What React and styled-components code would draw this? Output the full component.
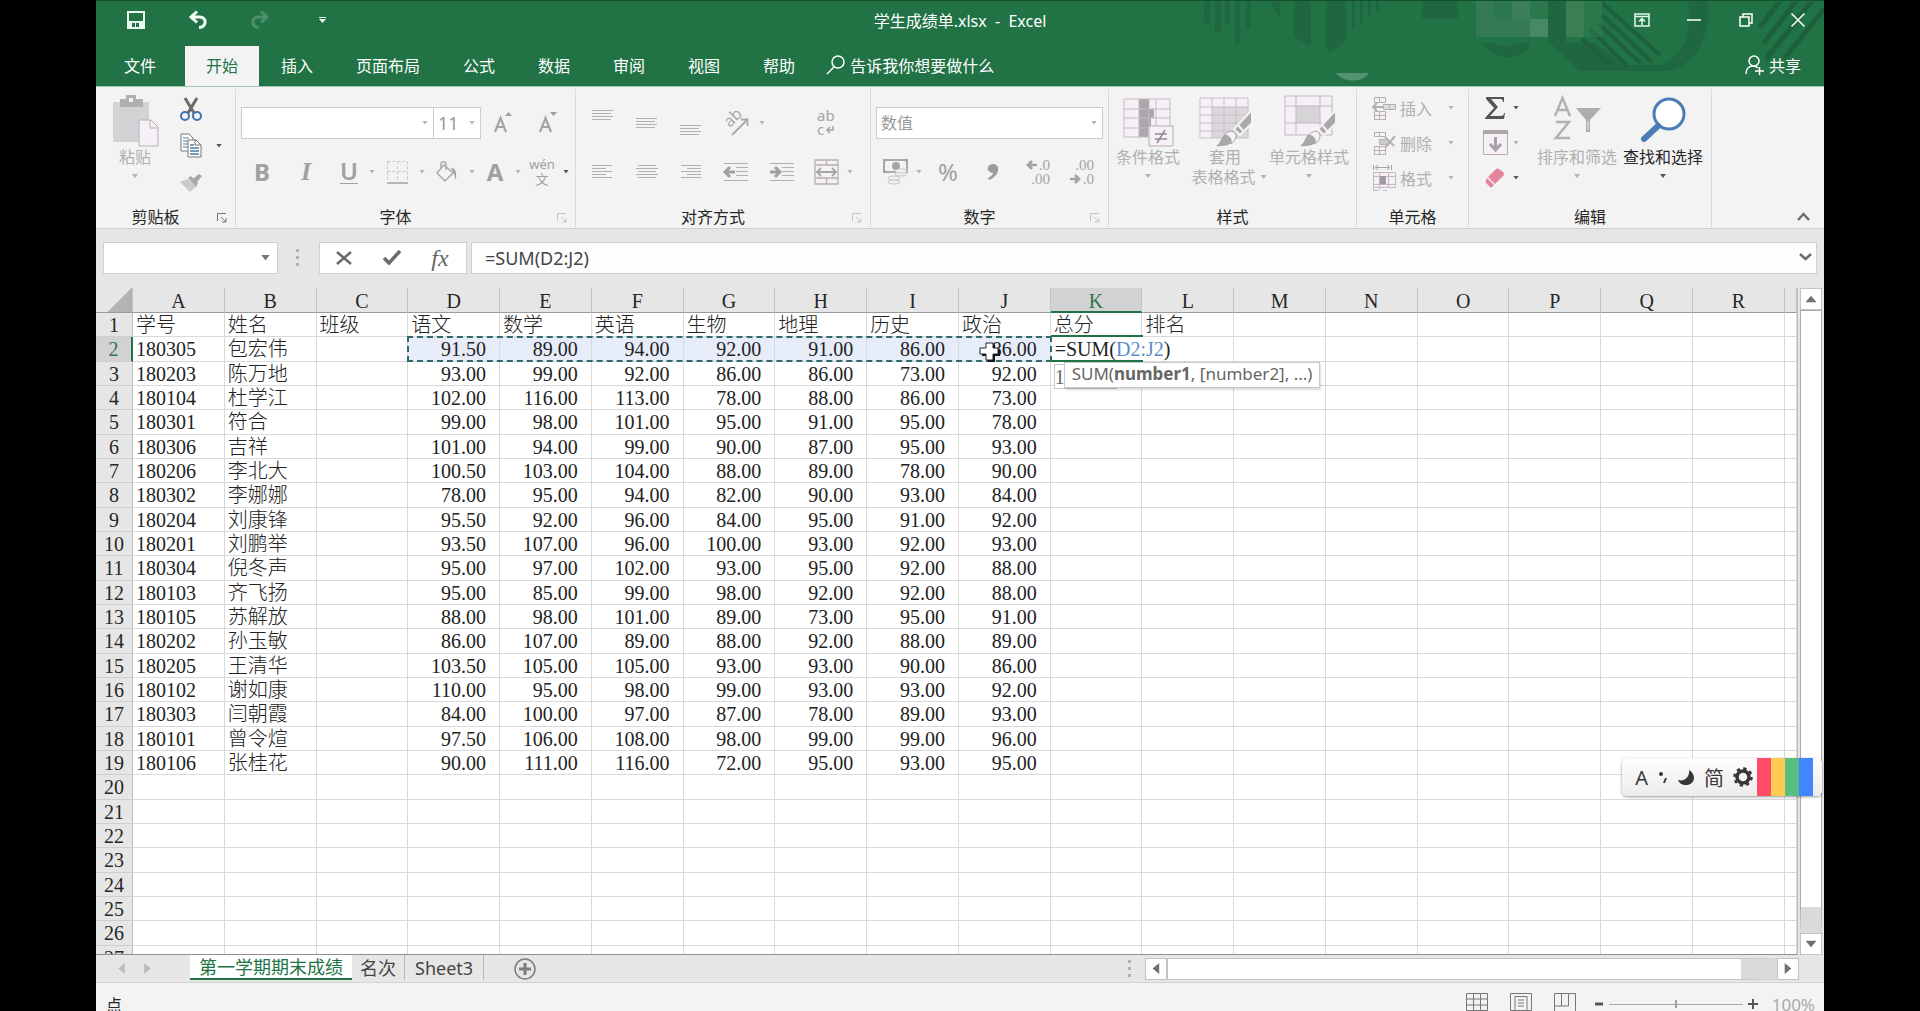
import React, { useState } from "react";
import styled, { createGlobalStyle, css } from "styled-components";

const columns = "ABCDEFGHIJKLMNOPQR".split("");

const headers = ["学号", "姓名", "班级", "语文", "数学", "英语", "生物", "地理", "历史", "政治", "总分", "排名"];

const students = [
  ["180305", "包宏伟", "", "91.50", "89.00", "94.00", "92.00", "91.00", "86.00", "86.00"],
  ["180203", "陈万地", "", "93.00", "99.00", "92.00", "86.00", "86.00", "73.00", "92.00"],
  ["180104", "杜学江", "", "102.00", "116.00", "113.00", "78.00", "88.00", "86.00", "73.00"],
  ["180301", "符合", "", "99.00", "98.00", "101.00", "95.00", "91.00", "95.00", "78.00"],
  ["180306", "吉祥", "", "101.00", "94.00", "99.00", "90.00", "87.00", "95.00", "93.00"],
  ["180206", "李北大", "", "100.50", "103.00", "104.00", "88.00", "89.00", "78.00", "90.00"],
  ["180302", "李娜娜", "", "78.00", "95.00", "94.00", "82.00", "90.00", "93.00", "84.00"],
  ["180204", "刘康锋", "", "95.50", "92.00", "96.00", "84.00", "95.00", "91.00", "92.00"],
  ["180201", "刘鹏举", "", "93.50", "107.00", "96.00", "100.00", "93.00", "92.00", "93.00"],
  ["180304", "倪冬声", "", "95.00", "97.00", "102.00", "93.00", "95.00", "92.00", "88.00"],
  ["180103", "齐飞扬", "", "95.00", "85.00", "99.00", "98.00", "92.00", "92.00", "88.00"],
  ["180105", "苏解放", "", "88.00", "98.00", "101.00", "89.00", "73.00", "95.00", "91.00"],
  ["180202", "孙玉敏", "", "86.00", "107.00", "89.00", "88.00", "92.00", "88.00", "89.00"],
  ["180205", "王清华", "", "103.50", "105.00", "105.00", "93.00", "93.00", "90.00", "86.00"],
  ["180102", "谢如康", "", "110.00", "95.00", "98.00", "99.00", "93.00", "93.00", "92.00"],
  ["180303", "闫朝霞", "", "84.00", "100.00", "97.00", "87.00", "78.00", "89.00", "93.00"],
  ["180101", "曾令煊", "", "97.50", "106.00", "108.00", "98.00", "99.00", "99.00", "96.00"],
  ["180106", "张桂花", "", "90.00", "111.00", "116.00", "72.00", "95.00", "93.00", "95.00"],
];

const rows = [headers, ...students];
while (rows.length < 27) rows.push([]);

const menu = ["插入", "页面布局", "公式", "数据", "审阅", "视图", "帮助"];

/* ---------- icons ---------- */

const SaveIcon = () => (
  <svg width="18" height="18" viewBox="0 0 18 18" fill="none" stroke="#e9fbef" strokeWidth="2">
    <path d="M1 1h16v16H1z" />
    <path d="M2 10h14v7H2z" fill="#e9fbef" stroke="none" />
    <path d="M5 12h3v4H5zM9 12h3v4H9z" fill="#217346" stroke="none" />
  </svg>
);

const UndoIcon = ({ color = "#f2fff6", flip }) => (
  <svg width="18" height="18" viewBox="0 0 18 18" fill="none" stroke={color} strokeWidth="3">
    <g transform={flip ? "translate(18 0) scale(-1 1)" : undefined}>
      <path d="M8 0.500L2 6l6 5.500M2 6h9c8 1 6 10-1 10.500" />
    </g>
  </svg>
);

const Decoration = () => (
  <svg width="624" height="86" viewBox="0 0 624 86">
    <g fill="#1f683f">
      <path d="M4 0h6v22H4zM15 0h6v32h-6zM25 0h5v22h-5zM35 0h5v44h-5zM46 0h5v28h-5zM70 0h10v18zM94 0h17v45l-17-9zM126 0h20v40l-16 12-4-4z" />
      <path d="M152 0h3v28h-3zM160 0h3v22h-3zM168 0h3v15h-3zM176 0h3v10h-3z" />
      <path d="M222 0h36v18h-36z" />
      <path d="M348 0h18v42h-18z" />
      <path d="M350 42h45l30 22h35c22-7 33-30 28-64h20c2 34-8 58-36 70h-92z" />
      <path d="M283 42h12c4 5 16 5 20 0h15c-4 18-38 20-47 0z" />
    </g>
    <g stroke="#1d6039" strokeWidth="4">
      <path d="M402 2l58 52M402 14l50 47M398 22l42 40M390 28l36 36M382 38l28 25" />
      <path d="M580 0l-20 26M596 0l-32 42M612 0l-46 58M624 8l-40 50" strokeWidth="5" />
    </g>
    <g fill="#3d7f58">
      <path d="M276 0h18v18h-18zM276 18h54v18h-54z" opacity="0.700" />
      <path d="M312 0h18v18h-18z" />
      <path d="M330 18h18v18h-18z" fill="#488864" />
      <path d="M366 0h18v36h-18z" opacity="0.900" />
      <path d="M294 0h18v18h-18zM330 0h18v18h-18zM384 0h18v36h-18z" opacity="0.400" />
    </g>
    <path d="M136 72h33c-6 10-26 10-33 0z" fill="#549370" />
  </svg>
);

const RibbonModeIcon = () => (
  <svg width="16" height="14" viewBox="0 0 16 14" fill="none" stroke="#e8f8ee" strokeWidth="1.500">
    <path d="M1 1h14v12H1zM1 3.500h14M8 12V6M5 8.500L8 5.500l3 3" />
  </svg>
);
const MinIcon = () => (
  <svg width="14" height="14" viewBox="0 0 14 14" stroke="#fff" strokeWidth="1.500"><path d="M0 7h14" /></svg>
);
const RestoreIcon = () => (
  <svg width="14" height="14" viewBox="0 0 14 14" fill="none" stroke="#fff" strokeWidth="1.500">
    <path d="M1 4h9v9H1zM4 4V1h9v9h-3" />
  </svg>
);
const CloseIcon = () => (
  <svg width="14" height="14" viewBox="0 0 14 14" stroke="#fff" strokeWidth="1.500"><path d="M0.500 0.500l13 13M13.500 0.500l-13 13" /></svg>
);
const TellIcon = () => (
  <svg width="19" height="20" viewBox="0 0 19 20" fill="none" stroke="#fff" strokeWidth="1.500">
    <circle cx="12" cy="7" r="6" /><path d="M8 12l-7 7" />
  </svg>
);
const ShareIcon = () => (
  <svg width="20" height="20" viewBox="0 0 20 20" fill="none" stroke="#fff" strokeWidth="1.500">
    <circle cx="9" cy="6" r="5" /><path d="M1 19c0-5 3-8 7-8 2 0 4 1 5 2M10 16h9M14.500 12v8" />
  </svg>
);

const PasteIcon = () => (
  <svg width="46" height="52" viewBox="0 0 46 52">
    <path d="M1 7h36v40H1z" fill="#d3d3d5" />
    <path d="M8 4h6V0h10v4h7v8H8z" fill="#b0afb1" />
    <path d="M17 3h4v4h-4z" fill="#f3f3f3" />
    <path d="M27 25h12l7 7v19H27z" fill="#f6eff6" stroke="#b5b2b5" />
    <path d="M38 25v8h7" fill="none" stroke="#b5b2b5" />
  </svg>
);
const CutIcon = () => (
  <svg width="22" height="24" viewBox="0 0 22 24" fill="none">
    <path d="M5 1l9 15M17 1L8 16" stroke="#6a6a6a" strokeWidth="3" />
    <circle cx="5" cy="19" r="4" stroke="#4173ad" strokeWidth="2" />
    <circle cx="17" cy="19" r="4" stroke="#4173ad" strokeWidth="2" />
  </svg>
);
const CopyIcon = () => (
  <svg width="22" height="25" viewBox="0 0 22 25" fill="#fff" stroke="#777">
    <path d="M1 1h8l4 4v13H1z" />
    <path d="M3 5h6M3 8h7M3 11h7M3 14h7" stroke="#4a7ca5" />
    <path d="M8 7h8l5 5v12H8z" />
    <path d="M15 7v5h6" fill="none" />
    <path d="M10 12h4M10 15h9M10 18h9M10 21h9" stroke="#4a7ca5" strokeWidth="1.500" />
  </svg>
);
const PainterIcon = () => (
  <svg width="22" height="18" viewBox="0 0 22 18">
    <path d="M0 8l8-3 8 8-6 5z" fill="#ccc9c9" />
    <path d="M8 4l3-2 7 7-2 4z" fill="#aaa" />
    <path d="M13 5l6-5 3 2-5 6z" fill="#a5a5a5" />
  </svg>
);
const BorderIcon = () => (
  <svg width="23" height="24" viewBox="0 0 23 24" fill="none" stroke="#cfc3ce" strokeDasharray="3 2">
    <path d="M1.500 1.500h20v20M1.500 1.500v20M11.500 1.500v20M1.500 11.500h20" />
    <path d="M1 23h21" stroke="#a3a0a3" strokeWidth="1.500" strokeDasharray="none" />
  </svg>
);
const FillIcon = () => (
  <svg width="24" height="22" viewBox="0 0 24 22" fill="none" stroke="#aaa" strokeWidth="1.500">
    <path d="M9 4l9 8-8 8-8-8z" />
    <path d="M6 7V3c0-3 5-3 5 0v6" />
    <path d="M16 7c4 0 6 3 5 12-2-3-1-6-3-8z" fill="#a3a3a3" stroke="none" />
  </svg>
);
const FontSizeIcon = ({ down }) => (
  <svg width="18" height="24" viewBox="0 0 18 24">
    <path d="M1 21L6.500 7 12 21M3 16h7" fill="none" stroke="#a5a5a5" strokeWidth="2.200" />
    <path d={down ? "M11 1h7l-3.500 4z" : "M11 5h7l-3.500-4z"} fill="#a0a0a0" />
  </svg>
);
const LinesIcon = ({ lines, top = 0 }) => (
  <svg width="24" height="26" viewBox="0 0 24 26" stroke="#b0b0b0">
    {lines.map(([from, to], i) => (
      <path key={i} d={`M${from} ${top + i * 3 + 0.5}H${to}`} />
    ))}
  </svg>
);
const OrientIcon = () => (
  <svg width="26" height="26" viewBox="0 0 26 26" fill="none" stroke="#a9a9a9" strokeWidth="1.800">
    <text x="0" y="0" transform="translate(7 18) rotate(-45)" fontSize="16" fill="#a9a9a9" stroke="none" fontFamily="Noto Sans">ab</text>
    <path d="M9 25L24 10M18 9.500h6.500V16" />
  </svg>
);
const WrapIcon = () => (
  <svg width="20" height="30" viewBox="0 0 20 30" fill="none" stroke="#a5a5a5" strokeWidth="1.500">
    <text x="1" y="13" fontSize="15" fill="#a5a5a5" stroke="none" fontFamily="Noto Sans">ab</text>
    <text x="1" y="27" fontSize="15" fill="#a5a5a5" stroke="none" fontFamily="Noto Sans">c</text>
    <path d="M17 18v4h-6M14 19l-3 3 3 3" />
  </svg>
);
const IndentIcon = ({ right }) => (
  <svg width="26" height="22" viewBox="0 0 26 22" fill="none" stroke="#b0b0b0">
    <path d="M1 2.500h24M13 6.500h12M13 10.500h12M13 14.500h12M1 19.500h24" />
    <g transform={right ? "translate(13 0) scale(-1 1)" : undefined}>
      <path d="M12 11H3M7 6l-5 5 5 5" stroke="#a0a0a0" strokeWidth="3" />
    </g>
  </svg>
);
const MergeIcon = () => (
  <svg width="25" height="26" viewBox="0 0 25 26" fill="none" stroke="#b8adb6">
    <path d="M1 1h23v24H1zM1 6h23M1 19h23M12.500 1v5M12.500 19v6" strokeWidth="1.300" />
    <path d="M3 13h19M7 9l-4 4 4 4M18 9l4 4-4 4" stroke="#a5a5a5" strokeWidth="1.800" />
  </svg>
);
const MoneyIcon = () => (
  <svg width="26" height="27" viewBox="0 0 26 27">
    <path d="M1 2h23v12H1z" fill="#f3f3f3" stroke="#a9a9a9" strokeWidth="2" />
    <circle cx="13" cy="8" r="4" fill="#a5a5a5" />
    <path d="M0 1h5L0 6zM25 1h-5l5 5zM0 15h5l-5-5z" fill="#a5a5a5" />
    <g fill="#f3eff2" stroke="#c9c4c8">
      <ellipse cx="18" cy="16" rx="6" ry="2" /><ellipse cx="18" cy="13" rx="6" ry="2" />
      <ellipse cx="11" cy="24" rx="6" ry="2" /><ellipse cx="11" cy="20" rx="6" ry="2" />
    </g>
  </svg>
);
const CommaIcon = () => (
  <svg width="12" height="18" viewBox="0 0 12 18">
    <path d="M6 1c8 0 7 12-4 16l-1-2c4-2 5-4 5-5C-1 10-1 1 6 1z" fill="#9b9b9b" />
  </svg>
);
const DecimalIcon = ({ less }) => (
  <svg width="26" height="30" viewBox="0 0 26 30" fill="none" stroke="#a3a3a3" strokeWidth="2.600">
    <text x="25" y="13" textAnchor="end" fontSize="15" fill="#a3a3a3" stroke="none" fontFamily="Liberation Serif">{less ? ".00" : ".0"}</text>
    <text x="25" y="27" textAnchor="end" fontSize="15" fill="#a3a3a3" stroke="none" fontFamily="Liberation Serif">{less ? ".0" : ".00"}</text>
    {less ? <path d="M1 22h9M6 18l4 4-4 4" /> : <path d="M12 8H3M7 4L3 8l4 4" />}
  </svg>
);

const Brush = () => (
  <>
    <path d="M55 15v13L43 40l-6-6z" fill="#aaa8aa" stroke="#f3f3f3" strokeWidth="2" />
    <path d="M41 30l6 7" stroke="#f3f3f3" strokeWidth="2" />
    <path d="M19 51c4-2 5-8 8-11 5-5 12-1 10 5-2 4-9 7-18 6z" fill="#a9a7a9" />
    <path d="M28 40c3-4 8-5 10-2s1 7-4 11c1-5-1-8-6-9z" fill="#f6f2f6" stroke="#a9a7a9" />
  </>
);
const CondIcon = () => (
  <svg width="52" height="52" viewBox="0 0 52 52">
    <path d="M2 4h46v38H2z" fill="#f6f0f6" />
    <path d="M17 4h10v10h5v9h-3v10h-3v9h-9z" fill="#a9a7a9" />
    <path d="M2 4h46v38H2zM2 14h46M2 23h46M2 33h46M17 4v38M27 4v38M34 4v38" fill="none" stroke="#c3bac2" />
    <path d="M27 31h24v20H27z" fill="#f6f0f6" stroke="#b4acb3" />
    <path d="M33 39h12M33 44h12M43 35l-8 13" stroke="#8e8e8e" strokeWidth="1.500" />
  </svg>
);
const TableIcon = () => (
  <svg width="56" height="52" viewBox="0 0 56 52">
    <path d="M3 3h48v40H3z" fill="#f6f0f6" />
    <path d="M15 12h36v31H15z" fill="#dbd8db" />
    <path d="M3 3h48v40H3zM3 12h48M3 20h48M3 28h48M3 36h48M15 3v40M27 3v40M39 3v40" fill="none" stroke="#c9bec8" />
    <Brush />
  </svg>
);
const CellStyleIcon = () => (
  <svg width="56" height="52" viewBox="0 0 56 52">
    <path d="M4 1h47v39H4z" fill="#f6f0f6" />
    <path d="M15 11h24v17H15z" fill="#d6d4d6" />
    <path d="M4 1h47v39H4zM4 11h47M4 28h47M15 1v39M39 1v39" fill="none" stroke="#c3b8c2" />
    <Brush />
  </svg>
);
const InsertIcon = () => (
  <svg width="25" height="26" viewBox="0 0 25 26" fill="#f6f0f6" stroke="#b5b0b5">
    <path d="M3.500 2.500h11v5h-11zM8.500 2.500v5M3.500 16.500h11v8h-11zM3.500 20.500h11M8.500 16.500v8" />
    <path d="M12.500 9.500h12v5h-12zM18.500 9.500v5" fill="#ddd" />
    <path d="M12 12H2M6 8l-4 4 4 4" fill="none" strokeWidth="2" />
  </svg>
);
const DeleteIcon = () => (
  <svg width="25" height="26" viewBox="0 0 25 26" fill="#f6f0f6" stroke="#b5b0b5">
    <path d="M3.500 2.500h11v4h-11zM8.500 2.500v4M3.500 16.500h11v8h-11zM3.500 20.500h11M8.500 16.500v8" />
    <path d="M8.500 9.500h9v5h-9z" fill="#ccc" />
    <path d="M14 7l9 9M24 6l-9 11" strokeWidth="2" />
  </svg>
);
const FormatIcon = () => (
  <svg width="25" height="26" viewBox="0 0 25 26" fill="#f6f0f6" stroke="#c3b9c2">
    <path d="M2.500 0v5M20.500 0v5M5 2.500h13M7 0L4 2.500 7 5M16 0l3 2.500L16 5" stroke="#a5a5a5" />
    <path d="M2.500 7.500h22v15h-22zM2.500 11.500h22M2.500 19.500h22M8.500 7.500v15M17.500 7.500v15" />
    <path d="M9 11h6v8H9z" fill="#9e9c9e" stroke="none" />
    <path d="M2.500 23v2.500h5l2-2M12 25.500h4" fill="none" />
  </svg>
);
const SumIcon = () => (
  <svg width="21" height="22" viewBox="0 0 21 22">
    <path d="M1 0h18v5h-1c0-2-1-3-3-3H6l7 8-8 9h10c3 0 4-1 4-3h1l-1 6H0v-1l9-10-8-9z" fill="#555" />
  </svg>
);
const FillDownIcon = () => (
  <svg width="25" height="25" viewBox="0 0 25 25">
    <path d="M0.500 0.500h24v24h-24z" fill="#f6f0f6" stroke="#b7adb6" />
    <path d="M0 0h25v4H0z" fill="#a9a7a9" />
    <path d="M12.500 7v13M7 14l5.500 6 5.500-6" fill="none" stroke="#a5a3a5" strokeWidth="3" />
  </svg>
);
const EraserIcon = () => (
  <svg width="20" height="20" viewBox="0 0 20 20" fill="#e4849a">
    <path d="M11 1q2-1 3 0l4 3q2 1 0 4l-8 8-7-7z" /><path d="M2 10l7 7-2 2q-1 1-2 0l-4-4q-1-1 0-3z" />
  </svg>
);
const SortIcon = () => (
  <svg width="48" height="48" viewBox="0 0 48 48">
    <path d="M2 21L9.500 3 17 21M4 15h11M3 27h13L3 43h14" fill="none" stroke="#b1b1b1" strokeWidth="2.500" />
    <path d="M23 13h25L37 25v12h-4V25z" fill="#adadad" />
    <path d="M35 26v9" stroke="#eee" />
  </svg>
);
const FindIcon = () => (
  <svg width="48" height="50" viewBox="0 0 48 50" fill="none" stroke="#4a7db5">
    <circle cx="30" cy="19" r="15" fill="#fff" strokeWidth="3" />
    <path d="M19 31L5 44" strokeWidth="6" strokeLinecap="round" />
  </svg>
);
const LauncherIcon = ({ color = "#999" }) => (
  <svg width="10" height="10" viewBox="0 0 10 10" fill="none" stroke={color}>
    <path d="M0.500 8V0.500H9M4 4l5 5M9 5v4H5" />
  </svg>
);
const ChevronIcon = ({ up }) => (
  <svg width="13" height="9" viewBox="0 0 13 9" fill="none" stroke="#6c6c6c" strokeWidth="2.500">
    <path d={up ? "M1 8l5.500-6L12 8" : "M1 1l5.500 5L12 1"} />
  </svg>
);
const CancelIcon = () => (
  <svg width="16" height="14" viewBox="0 0 16 14" stroke="#6a6a6a" strokeWidth="2.500"><path d="M1 1l14 12M15 1L1 13" /></svg>
);
const CheckIcon = () => (
  <svg width="18" height="15" viewBox="0 0 18 15" fill="none" stroke="#6a6a6a" strokeWidth="3.500"><path d="M1 8l5 5L17 1" /></svg>
);
const CursorIcon = () => (
  <svg width="22" height="22" viewBox="0 0 22 22">
    <path d="M7 2h7v5h5v6h-5v6H7v-6H1V7h6z" transform="translate(2 2)" fill="#111" />
    <path d="M7 2h7v5h5v6h-5v6H7v-6H1V7h6z" fill="#fff" stroke="#222" />
  </svg>
);
const MoonIcon = () => (
  <svg width="17" height="17" viewBox="0 0 17 17"><path d="M11 1c8 5 6 15-3 15-4 0-7-2-8-5 6 2 12-3 11-10z" fill="#3a3535" /></svg>
);
const GearIcon = () => (
  <svg width="20" height="20" viewBox="0 0 20 20" fill="none" stroke="#3a3535">
    <circle cx="10" cy="10" r="6" strokeWidth="3.500" />
    <circle cx="10" cy="10" r="8.500" strokeWidth="2.500" strokeDasharray="3.300 3.370" />
  </svg>
);
const PunctIcon = () => (
  <svg width="12" height="14" viewBox="0 0 12 14" fill="#3a3535"><circle cx="4" cy="4" r="2" /><path d="M8 8h2l-2 5H6z" /></svg>
);
const ViewIcon = ({ d }) => (
  <svg width="22" height="18" viewBox="0 0 22 18" fill="none" stroke="#777"><path d={d} /></svg>
);

/* ---------- ribbon helpers ---------- */

const Tool = ({ label, w, children }) => (
  <ToolButton type="button" aria-label={label} $w={w}>{children}</ToolButton>
);

const Group = ({ title, width, launcher, children }) => (
  <GroupBox $width={width}>
    <GroupBody>{children}</GroupBody>
    <GroupTitle>
      {title}
      {launcher && <Launcher type="button" aria-label={title + "设置"}><LauncherIcon color={launcher} /></Launcher>}
    </GroupTitle>
  </GroupBox>
);

const full = [[1, 22], [1, 20], [1, 22], [1, 20]];

export default function App() {
  const [formula, setFormula] = useState("=SUM(D2:J2)");
  const [zoom, setZoom] = useState(50);

  return (
    <Screen>
      <GlobalStyle />
      <Window>
        <Top>
          <Backdrop><Decoration /></Backdrop>
          <TitleBar>
            <QuickAccess>
              <TitleButton type="button" aria-label="保存"><SaveIcon /></TitleButton>
              <TitleButton type="button" aria-label="撤消"><UndoIcon /></TitleButton>
              <TitleButton type="button" aria-label="恢复"><UndoIcon color="#4b9069" flip /></TitleButton>
              <TitleButton type="button" aria-label="自定义快速访问工具栏">
                <svg width="7" height="6" viewBox="0 0 7 6" fill="#e8f8ee"><path d="M0 0h7v1H0zM0 2h7L3.500 6z" /></svg>
              </TitleButton>
            </QuickAccess>
            <Title>学生成绩单.xlsx&nbsp; -&nbsp; Excel</Title>
            <WindowButtons>
              <WinButton type="button" aria-label="功能区显示选项"><RibbonModeIcon /></WinButton>
              <WinButton type="button" aria-label="最小化"><MinIcon /></WinButton>
              <WinButton type="button" aria-label="还原"><RestoreIcon /></WinButton>
              <WinButton type="button" aria-label="关闭"><CloseIcon /></WinButton>
            </WindowButtons>
          </TitleBar>
          <Tabs>
            <FileTab type="button">文件</FileTab>
            <Tab type="button" $active>开始</Tab>
            {menu.map((name) => <Tab type="button" key={name}>{name}</Tab>)}
            <TellMe type="button"><TellIcon />告诉我你想要做什么</TellMe>
            <Share type="button"><ShareIcon />共享</Share>
          </Tabs>
        </Top>

        <Ribbon>
          <Group title="剪贴板" width={140} launcher="#777">
            <BigButton type="button" $w={54} $dim $left={12}>
              <BigIcon><PasteIcon /></BigIcon>粘贴<Arrow $spaced />
            </BigButton>
            <SmallColumn $row={37} $left={4}>
              <SmallRow><Tool label="剪切" w={50}><CutIcon /></Tool></SmallRow>
              <SmallRow><Tool label="复制" w={50}><CopyIcon /></Tool><Arrow $dark /></SmallRow>
              <SmallRow><Tool label="格式刷" w={50}><PainterIcon /></Tool></SmallRow>
            </SmallColumn>
          </Group>

          <Group title="字体" width={340} launcher="#c4c4c4">
            <Rows>
              <ToolRow>
                <Combo $w={193}><select aria-label="字体"><option></option></select><Arrow /></Combo>
                <Combo $w={47} $large><select aria-label="字号"><option>11</option></select><Arrow /></Combo>
                <Tool label="增大字号" w={44}><FontSizeIcon /></Tool>
                <Tool label="减小字号" w={46}><FontSizeIcon down /></Tool>
              </ToolRow>
              <ToolRow>
                <Tool label="加粗" w={42}><Bold>B</Bold></Tool>
                <Tool label="倾斜" w={46}><Italic>I</Italic></Tool>
                <Tool label="下划线" w={40}><Under>U</Under></Tool><Arrow />
                <Tool label="边框" w={44}><BorderIcon /></Tool><Arrow />
                <Tool label="填充颜色" w={44}><FillIcon /></Tool><Arrow />
                <Tool label="字体颜色" w={40}><Bold>A</Bold></Tool><Arrow />
                <Tool label="拼音" w={42}><Pinyin><span>wén</span><span>文</span></Pinyin></Tool><Arrow $dark />
              </ToolRow>
            </Rows>
          </Group>

          <Group title="对齐方式" width={295} launcher="#c4c4c4">
            <Rows>
              <ToolRow>
                <Tool label="顶端对齐" w={44}><LinesIcon lines={full} /></Tool>
                <Tool label="垂直居中" w={44}><LinesIcon lines={full} top={8} /></Tool>
                <Tool label="底端对齐" w={44}><LinesIcon lines={full} top={15} /></Tool>
                <Tool label="方向" w={46}><OrientIcon /></Tool><Arrow />
                <Gap />
                <Tool label="自动换行" w={46}><WrapIcon /></Tool>
              </ToolRow>
              <ToolRow>
                <Tool label="左对齐" w={44}><LinesIcon top={6} lines={[[1, 21], [1, 15], [1, 21], [1, 15], [1, 21]]} /></Tool>
                <Tool label="居中" w={44}><LinesIcon top={6} lines={[[3, 21], [1, 23], [3, 21], [1, 23], [3, 21]]} /></Tool>
                <Tool label="右对齐" w={44}><LinesIcon top={6} lines={[[2, 22], [8, 22], [2, 22], [8, 22], [2, 22]]} /></Tool>
                <Tool label="减少缩进量" w={46}><IndentIcon /></Tool>
                <Tool label="增加缩进量" w={46}><IndentIcon right /></Tool>
                <Tool label="合并后居中" w={42}><MergeIcon /></Tool><Arrow />
              </ToolRow>
            </Rows>
          </Group>

          <Group title="数字" width={238} launcher="#c4c4c4">
            <Rows>
              <ToolRow>
                <Combo $w={227}><select aria-label="数字格式"><option>数值</option></select><Arrow /></Combo>
              </ToolRow>
              <ToolRow>
                <Tool label="会计数字格式" w={40}><MoneyIcon /></Tool><Arrow />
                <Tool label="百分比" w={52}><Percent>%</Percent></Tool>
                <Tool label="千位分隔" w={38}><CommaIcon /></Tool>
                <Tool label="增加小数位数" w={52}><DecimalIcon /></Tool>
                <Tool label="减少小数位数" w={36}><DecimalIcon less /></Tool>
              </ToolRow>
            </Rows>
          </Group>

          <Group title="样式" width={248}>
            <BigButton type="button" $w={70} $dim $left={4}>
              <BigIcon><CondIcon /></BigIcon>条件格式<Arrow $spaced />
            </BigButton>
            <BigButton type="button" $w={84} $dim>
              <BigIcon><TableIcon /></BigIcon>套用<Inline>表格格式<Arrow /></Inline>
            </BigButton>
            <BigButton type="button" $w={84} $dim>
              <BigIcon><CellStyleIcon /></BigIcon>单元格样式<Arrow $spaced />
            </BigButton>
          </Group>

          <Group title="单元格" width={112}>
            <SmallColumn $row={35} $left={14}>
              <SmallButton type="button"><InsertIcon /><span>插入</span><Arrow /></SmallButton>
              <SmallButton type="button"><DeleteIcon /><span>删除</span><Arrow /></SmallButton>
              <SmallButton type="button"><FormatIcon /><span>格式</span><Arrow /></SmallButton>
            </SmallColumn>
          </Group>

          <Group title="编辑" width={243}>
            <SmallColumn $row={35} $left={8}>
              <SmallRow><Tool label="求和" w={36}><SumIcon /></Tool><Arrow $dark /></SmallRow>
              <SmallRow><Tool label="填充" w={36}><FillDownIcon /></Tool><Arrow /></SmallRow>
              <SmallRow><Tool label="清除" w={36}><EraserIcon /></Tool><Arrow $dark /></SmallRow>
            </SmallColumn>
            <BigButton type="button" $w={86} $dim $left={15}>
              <BigIcon><SortIcon /></BigIcon>排序和筛选<Arrow $spaced />
            </BigButton>
            <BigButton type="button" $w={86}>
              <BigIcon><FindIcon /></BigIcon>查找和选择<Arrow $dark $spaced />
            </BigButton>
          </Group>
          <Collapse type="button" aria-label="折叠功能区"><ChevronIcon up /></Collapse>
        </Ribbon>

        <FormulaBar>
          <NameBox>
            <input aria-label="名称框" defaultValue="" />
            <BigArrow />
          </NameBox>
          <Grip><i /><i /><i /></Grip>
          <FormulaTools>
            <Tool label="取消" w={48}><CancelIcon /></Tool>
            <Tool label="输入" w={48}><CheckIcon /></Tool>
            <Tool label="插入函数" w={48}><Fx>fx</Fx></Tool>
          </FormulaTools>
          <FormulaField>
            <input aria-label="编辑栏" value={formula} onChange={(e) => setFormula(e.target.value)} />
            <ChevronIcon />
          </FormulaField>
        </FormulaBar>

        <SheetArea>
          <GridView>
            <Grid>
              <colgroup>
                <col className="head" />
                {columns.map((c) => <col key={c} />)}
                <col className="rest" />
              </colgroup>
              <thead>
                <tr>
                  <Corner aria-label="全选" />
                  {columns.map((c) => <ColHead key={c} scope="col" $active={c === "K"}>{c}</ColHead>)}
                  <ColHead aria-hidden="true" />
                </tr>
              </thead>
              <tbody>
                {rows.map((row, r) => (
                  <tr key={r}>
                    <RowHead scope="row" $active={r === 1}>{r + 1}</RowHead>
                    {columns.map((c, i) => {
                      const inRange = r === 1 && i > 2 && i < 10;
                      return (
                        <Cell key={c} $number={r > 0 && i > 2} $range={inRange}>
                          {row[i]}
                          {r === 1 && c === "D" && <Marquee />}
                          {r === 1 && c === "J" && <Cursor><CursorIcon /></Cursor>}
                          {r === 1 && c === "K" && (
                            <>
                              <Editing>=SUM(<b>D2:J2</b>)</Editing>
                              <ActiveFrame />
                              <Ghost>1</Ghost>
                              <Hint>SUM(<b>number1</b>, [number2], ...)</Hint>
                            </>
                          )}
                        </Cell>
                      );
                    })}
                    <Cell />
                  </tr>
                ))}
              </tbody>
            </Grid>
          </GridView>
          <VScroll>
            <ScrollButton type="button" aria-label="向上滚动"><Tri $dir="up" /></ScrollButton>
            <VThumb />
            <ScrollButton type="button" aria-label="向下滚动"><Tri $dir="down" /></ScrollButton>
          </VScroll>
        </SheetArea>

        <SheetBar>
          <SheetNav>
            <Tri $dir="left" $faint /><Tri $dir="right" $faint />
          </SheetNav>
          <SheetTab type="button" $active>第一学期期末成绩</SheetTab>
          <SheetTab type="button">名次</SheetTab>
          <SheetTab type="button">Sheet3</SheetTab>
          <AddSheet type="button" aria-label="新工作表">
            <svg width="22" height="22" viewBox="0 0 22 22" fill="none" stroke="#7d7d7d">
              <circle cx="11" cy="11" r="10" strokeWidth="1.500" /><path d="M5 11h12M11 5v12" strokeWidth="3" />
            </svg>
          </AddSheet>
          <Push />
          <Grip><i /><i /><i /></Grip>
          <HScroll>
            <ScrollButton type="button" aria-label="向左滚动"><Tri $dir="left" /></ScrollButton>
            <HThumb />
            <ScrollButton type="button" aria-label="向右滚动"><Tri $dir="right" /></ScrollButton>
          </HScroll>
        </SheetBar>

        <StatusBar>
          <Mode>点</Mode>
          <Views>
            <ViewIcon d="M0.500 0.500h21v17H0.500zM0.500 6h21M0.500 12h21M7.500 0v18M14.500 0v18" />
            <ViewIcon d="M0.500 0.500h21v17H0.500zM5 3.500h12v14H5zM8 7h6M8 10h6M8 13h6" />
            <ViewIcon d="M0.500 18V0.500h21V18M7.500 0v13h-7M14.500 0v13h-7" />
          </Views>
          <Sign type="button" aria-label="缩小">
            <svg width="10" height="10" viewBox="0 0 10 10" stroke="#555" strokeWidth="3"><path d="M1 5h8" /></svg>
          </Sign>
          <Slider aria-label="缩放" type="range" value={zoom} onChange={(e) => setZoom(+e.target.value)} />
          <Sign type="button" aria-label="放大">
            <svg width="10" height="10" viewBox="0 0 10 10" stroke="#555" strokeWidth="2"><path d="M0 5h10M5 0v10" /></svg>
          </Sign>
          <ZoomText>100%</ZoomText>
        </StatusBar>

        <ImeBar>
          <span>A</span>
          <PunctIcon />
          <MoonIcon />
          <span>简</span>
          <GearIcon />
          <Stripes><i /><i /><i /><i /></Stripes>
        </ImeBar>
      </Window>
    </Screen>
  );
}

/* ---------- styles ---------- */

const GlobalStyle = createGlobalStyle`
  * { box-sizing: border-box; }
  body {
    margin: 0;
    background: #000;
    font-family: "Noto Sans", "Noto Sans CJK SC", sans-serif;
    font-size: 16px;
    color: #262626;
  }
  button, input, select {
    font: inherit;
    color: inherit;
    border: 0;
    padding: 0;
    margin: 0;
    background: none;
  }
  svg { display: block; flex: none; overflow: visible; }
`;

const Screen = styled.div`
  height: 100vh;
  padding: 0 5%;
  background: #000;
`;

const Window = styled.div`
  position: relative;
  height: 100%;
  display: flex;
  flex-direction: column;
  background: #e6e6e6;
  overflow: hidden;
`;

const Top = styled.header`
  position: relative;
  flex: none;
  background: #217346;
  border-top: 1px solid #12502c;
  color: #fff;
`;

const Backdrop = styled.div`
  position: absolute;
  top: 0;
  right: 0;
`;

const TitleBar = styled.div`
  position: relative;
  display: grid;
  grid-template-columns: 1fr auto 1fr;
  height: 45px;
  padding-bottom: 8px;
  align-items: center;
`;

const QuickAccess = styled.div`
  display: flex;
  align-items: center;
  padding-left: 9px;
`;

const TitleButton = styled.button`
  display: flex;
  justify-content: center;
  width: 62px;
`;

const Title = styled.h1`
  margin: 0;
  font-size: 16px;
  font-weight: 400;
`;

const WindowButtons = styled.div`
  display: flex;
  justify-content: flex-end;
`;

const WinButton = styled.button`
  width: 52px;
  display: flex;
  justify-content: center;
`;

const Tabs = styled.nav`
  position: relative;
  display: flex;
  gap: 1px;
  height: 40px;
`;

const Tab = styled.button`
  padding: 0 21px 2px;
  color: ${(p) => (p.$active ? "#217346" : "#fff")};
  background: ${(p) => (p.$active ? "#f3f3f3" : "none")};
`;

const FileTab = styled(Tab)`
  width: 88px;
  padding: 0 0 2px;
`;

const TellMe = styled.button`
  display: flex;
  align-items: center;
  gap: 5px;
  padding: 0 0 2px 9px;
`;

const Share = styled(TellMe)`
  margin-left: auto;
  padding-right: 23px;
  gap: 4px;
`;

const Ribbon = styled.div`
  flex: none;
  display: flex;
  height: 143px;
  padding: 2px 0 1px;
  background: #f3f3f3;
  border-top: 1px solid #9fcbb0;
  border-bottom: 1px solid #cfcfcf;
`;

const GroupBox = styled.section`
  display: flex;
  flex-direction: column;
  flex: 0 0 ${(p) => p.$width}px;
  border-right: 1px solid #d9d9d9;
`;

const GroupBody = styled.div`
  display: flex;
  flex: 1;
`;

const GroupTitle = styled.div`
  position: relative;
  height: 20px;
  line-height: 20px;
  text-align: center;
  padding-right: 20px;
  &:not(:has(button)) {
    padding-right: 0;
  }
`;

const Launcher = styled.button`
  position: absolute;
  right: 8px;
  top: 6px;
`;

const Rows = styled.div`
  padding: 9px 0 0 5px;
`;

const ToolRow = styled.div`
  display: flex;
  align-items: center;
  height: 49px;
`;

const ToolButton = styled.button`
  flex: none;
  width: ${(p) => p.$w}px;
  display: flex;
  justify-content: center;
  align-items: center;
  color: #a0a0a0;
`;

const Gap = styled.span`
  width: 38px;
`;

const Arrow = styled.i`
  flex: none;
  width: 6px;
  height: 4px;
  background: ${(p) => (p.$dark ? "#555" : "#b3b3b3")};
  clip-path: polygon(0 0, 100% 0, 50% 100%);
  margin-top: ${(p) => (p.$spaced ? 7 : 0)}px;
`;

const BigArrow = styled(Arrow)`
  width: 9px;
  height: 6px;
  background: #777;
`;

const BigButton = styled.button`
  flex: none;
  width: ${(p) => p.$w}px;
  margin-left: ${(p) => p.$left || 0}px;
  padding-top: 6px;
  display: flex;
  flex-direction: column;
  align-items: center;
  line-height: 20px;
  white-space: nowrap;
  color: ${(p) => (p.$dim ? "#b0b0b0" : "#262626")};
`;

const BigIcon = styled.span`
  display: flex;
  height: 52px;
`;

const Inline = styled.span`
  display: flex;
  align-items: center;
  gap: 5px;
  padding-left: 8px;
`;

const SmallColumn = styled.div`
  padding-left: ${(p) => p.$left || 0}px;
  display: grid;
  grid-auto-rows: ${(p) => p.$row}px;
  padding-top: 1px;
`;

const SmallRow = styled.div`
  display: flex;
  align-items: center;
`;

const SmallButton = styled.button`
  display: flex;
  align-items: center;
  gap: 4px;
  color: #b0b0b0;
  span {
    margin-right: 12px;
  }
`;

const Combo = styled.label`
  display: flex;
  align-items: center;
  width: ${(p) => p.$w}px;
  height: 32px;
  padding: 0 5px 0 4px;
  background: #fff;
  border: 1px solid #cdcdcd;
  color: #999;
  font-size: ${(p) => (p.$large ? 18 : 16)}px;
  & + & {
    border-left: 0;
  }
  select {
    flex: 1;
    min-width: 0;
    appearance: none;
    outline: 0;
  }
`;

const Bold = styled.b`
  font-size: 24px;
  line-height: 28px;
`;

const Italic = styled.i`
  font: italic bold 26px/28px "Liberation Serif", serif;
`;

const Under = styled(Bold)`
  font-weight: 600;
  line-height: 24px;
  border-bottom: 1px solid #a0a0a0;
`;

const Pinyin = styled.span`
  display: flex;
  flex-direction: column;
  font-size: 13px;
  line-height: 15px;
`;

const Percent = styled.span`
  font-size: 24px;
  line-height: 28px;
`;

const Collapse = styled.button`
  margin: auto 14px 2px auto;
  height: 18px;
`;

const FormulaBar = styled.div`
  flex: none;
  display: flex;
  align-items: center;
  height: 59px;
  padding: 0 7px 2px 7px;
`;

const NameBox = styled.div`
  display: flex;
  align-items: center;
  width: 175px;
  height: 32px;
  padding-right: 7px;
  background: #fff;
  border: 1px solid #d0d0d0;
  input {
    flex: 1;
    min-width: 0;
  }
`;

const Grip = styled.span`
  display: flex;
  flex-direction: column;
  gap: 4px;
  padding: 0 20px 0 18px;
  i {
    width: 3px;
    height: 3px;
    background: #b2b2b2;
  }
`;

const FormulaTools = styled.div`
  display: flex;
  height: 32px;
  padding-right: 2px;
  background: #fff;
  border: 1px solid #d0d0d0;
`;

const Fx = styled.span`
  font: italic 24px/28px "Liberation Serif", serif;
  color: #666;
`;

const FormulaField = styled.div`
  flex: 1;
  display: flex;
  align-items: center;
  height: 32px;
  margin-left: 4px;
  padding: 0 4px 0 13px;
  background: #fdfdfd;
  border: 1px solid #d0d0d0;
  input {
    flex: 1;
    font-size: 18px;
    color: #444;
    outline: 0;
  }
`;

const SheetArea = styled.main`
  flex: 1;
  min-height: 0;
  display: flex;
  padding-right: 2px;
`;

const GridView = styled.div`
  flex: 1;
  overflow: hidden;
  background: #fff;
  border-right: 1px solid #bdbdbd;
  border-bottom: 1px solid #8f8f8f;
`;

const Grid = styled.table`
  width: 100%;
  height: 682px;
  table-layout: fixed;
  border-collapse: separate;
  border-spacing: 0;
  font: 300 20px/20px "Liberation Serif", "Noto Sans CJK SC", serif;
  col.head {
    width: 37px;
  }
  col.rest {
    width: 12px;
  }
`;

const headCell = css`
  padding: 0;
  font-weight: 400;
  text-align: center;
  color: ${(p) => (p.$active ? "#2f7350" : "#262626")};
  background: ${(p) => (p.$active ? "#d2d2d2" : "#e6e6e6")};
`;

const ColHead = styled.th`
  ${headCell}
  height: 25px;
  padding-top: 2px;
  border-right: 1px solid #c4c4c4;
  border-bottom: ${(p) => (p.$active ? "2px solid #217346" : "1px solid #9b9b9b")};
`;

const Corner = styled.td`
  padding: 0;
  border-right: 1px solid #c4c4c4;
  border-bottom: 1px solid #9b9b9b;
  background: linear-gradient(135deg, #e6e6e6 60%, #b3b3b3 60%);
`;

const RowHead = styled.th`
  ${headCell}
  padding-top: 1px;
  border-right: ${(p) => (p.$active ? "2px solid #217346" : "1px solid #bdbdbd")};
  border-bottom: 1px solid #cfcfcf;
`;

const Cell = styled.td`
  position: relative;
  padding: ${(p) => (p.$number ? "1px 13px 0 3px" : "1px 3px 0")};
  text-align: ${(p) => (p.$number ? "right" : "left")};
  white-space: nowrap;
  color: #222;
  background: ${(p) => (p.$range ? "#e7ecf9" : "none")};
  border-right: 1px solid #d9d9d9;
  border-bottom: 1px solid #d9d9d9;
`;

const Marquee = styled.span`
  position: absolute;
  z-index: 1;
  top: -1px;
  left: -1px;
  width: 710%;
  height: calc(100% + 2px);
  border: 2px dashed #2f6a68;
`;

const Cursor = styled.span`
  position: absolute;
  z-index: 2;
  left: 20px;
  top: 4px;
`;

const Editing = styled.span`
  position: absolute;
  z-index: 1;
  left: 1px;
  top: 0;
  bottom: 0;
  padding: 2px 0 0 3px;
  background: #fff;
  b {
    font-weight: 400;
    color: #5b8cc4;
  }
`;

const ActiveFrame = styled.span`
  position: absolute;
  z-index: 1;
  left: 0;
  right: -2px;
  top: -2px;
  bottom: -1px;
  border: solid #217346;
  border-width: 2px 0;
`;

const Ghost = styled.span`
  position: absolute;
  z-index: 2;
  left: 3px;
  top: 27px;
  width: 63px;
  height: 25px;
  padding: 2px 0;
  text-align: left;
  color: #666;
  background: #fff;
  border: 1px solid #c9c9c9;
`;

const Hint = styled.span`
  position: absolute;
  z-index: 3;
  left: 13px;
  top: 25px;
  height: 26px;
  padding: 0 7px;
  font: 400 17px/22px "Noto Sans", sans-serif;
  color: #666;
  background: #fff;
  border: 1px solid #c9c9c9;
  box-shadow: 1px 2px 2px rgba(0, 0, 0, 0.15);
`;

const VScroll = styled.div`
  width: 24px;
  display: flex;
  flex-direction: column;
  padding-left: 2px;
`;

const ScrollButton = styled.button`
  flex: none;
  display: grid;
  place-items: center;
  width: 22px;
  height: 22px;
  background: #fff;
  border: 1px solid #c3c3c3;
`;

const VThumb = styled.div`
  flex: 1;
  background: #fff;
  border: 1px solid #ababab;
  border-bottom: 26px solid #dadada;
`;

const shapes = {
  up: "polygon(50% 20%, 100% 80%, 0 80%)",
  down: "polygon(0 20%, 100% 20%, 50% 80%)",
  left: "polygon(80% 0, 80% 100%, 20% 50%)",
  right: "polygon(20% 0, 80% 50%, 20% 100%)",
};

const Tri = styled.i`
  width: 11px;
  height: 11px;
  background: ${(p) => (p.$faint ? "#bcbcbc" : "#707070")};
  clip-path: ${(p) => shapes[p.$dir]};
`;

const SheetBar = styled.div`
  flex: none;
  display: flex;
  align-items: center;
  height: 28px;
  padding-right: 25px;
  border-bottom: 1px solid #d3d3d3;
`;

const SheetNav = styled.div`
  display: flex;
  gap: 15px;
  width: 94px;
  padding-left: 20px;
`;

const SheetTab = styled.button`
  height: 25px;
  align-self: flex-start;
  padding: 0 ${(p) => (p.$active ? 9 : 8)}px;
  font-size: 18px;
  line-height: 22px;
  color: ${(p) => (p.$active ? "#217346" : "#444")};
  background: ${(p) => (p.$active ? "#fff" : "none")};
  border-bottom: ${(p) => (p.$active ? "2px solid #217346" : "0")};
  border-right: ${(p) => (p.$active ? "0" : "1px solid #b8b8b8")};
  & + & + & {
    padding: 0 10px;
  }
`;

const AddSheet = styled.button`
  margin-left: 30px;
`;

const Push = styled.span`
  flex: 1;
`;

const HScroll = styled.div`
  flex: 0 0 calc(38% + 7px);
  display: flex;
  margin-left: -6px;
`;

const HThumb = styled.div`
  flex: 1;
  background: #fff;
  border: 1px solid #c3c3c3;
  border-right: 36px solid #dadada;
`;

const StatusBar = styled.footer`
  flex: none;
  display: flex;
  align-items: flex-start;
  height: 28px;
  padding: 10px 9px 0 10px;
  line-height: 24px;
  background: #f3f3f3;
  overflow: hidden;
`;

const Mode = styled.span`
  flex: 1;
`;

const Views = styled.span`
  display: flex;
  gap: 22px;
  margin-right: 14px;
`;

const Sign = styled.button`
  width: 18px;
  height: 22px;
  display: grid;
  place-items: center;
`;

const Slider = styled.input`
  width: 134px;
  height: 22px;
  margin: 0 1px;
  appearance: none;
  background: linear-gradient(#a8a8a8, #a8a8a8) center / 100% 1px no-repeat;
  &::-webkit-slider-thumb {
    appearance: none;
    width: 2px;
    height: 8px;
    background: #a0a0a0;
  }
`;

const ZoomText = styled.span`
  width: 53px;
  text-align: right;
  font-size: 17px;
  color: #aaa;
`;

const ImeBar = styled.div`
  position: absolute;
  right: 2px;
  bottom: 215px;
  display: flex;
  align-items: center;
  gap: 9px;
  height: 38px;
  padding: 0 9px 0 13px;
  font-size: 20px;
  color: #3a3535;
  background: linear-gradient(#fdfdfd, #ececec);
  border-radius: 5px;
  box-shadow: 0 1px 3px rgba(0, 0, 0, 0.4);
`;

const Stripes = styled.span`
  display: flex;
  height: 100%;
  margin-left: -5px;
  i {
    width: 14px;
    background: #ff4b68;
  }
  i:nth-child(2) {
    background: #ffcb52;
  }
  i:nth-child(3) {
    background: #59bf80;
  }
  i:nth-child(4) {
    background: #4285ff;
  }
`;
